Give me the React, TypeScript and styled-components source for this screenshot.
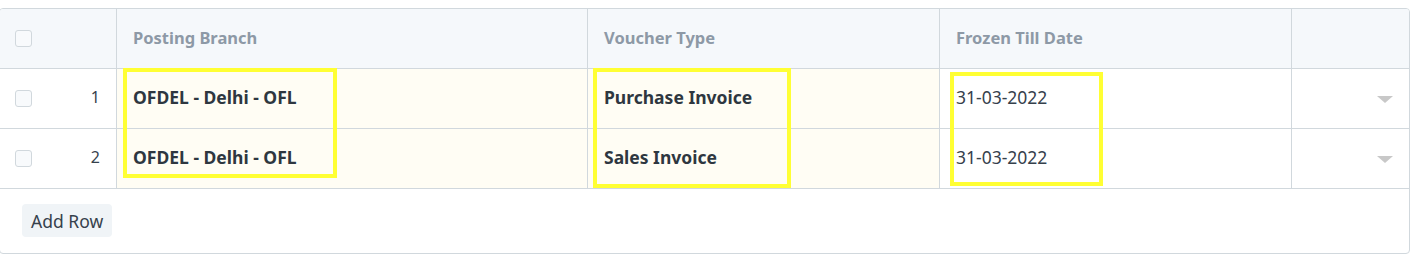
import styled, { createGlobalStyle } from "styled-components";

const Global = createGlobalStyle`
  body {
    margin: 0;
    background: #ffffff;
    font-family: "Noto Sans", "Open Sans", sans-serif;
  }
`;

const COLS = "117px 471px 352px 352px 1fr";

const Page = styled.div`
  position: relative;
  padding-top: 8px;
  height: 262px;
  box-sizing: border-box;
  overflow: hidden;
`;

const Grid = styled.div`
  margin-left: -1px;
  width: 1411px;
  border: 1px solid #d1d8dd;
  border-radius: 4px;
  box-sizing: border-box;
  overflow: hidden;
`;

const Row = styled.div<{ $head?: boolean }>`
  display: grid;
  grid-template-columns: ${COLS};
  height: 60px;
  border-bottom: 1px solid #d1d8dd;
  background: ${(p) => (p.$head ? "#f5f8fb" : "#ffffff")};
  box-sizing: border-box;
`;

const Cell = styled.div<{ $tint?: boolean; $last?: boolean }>`
  display: flex;
  align-items: center;
  padding: 0 16px 3px;
  border-right: ${(p) => (p.$last ? "none" : "1px solid #d1d8dd")};
  background: ${(p) => (p.$tint ? "#fffdf4" : "transparent")};
  font-size: 17.5px;
  color: #36414c;
  white-space: nowrap;
`;

const HeadText = styled.span`
  font-size: 16.5px;
  font-weight: 700;
  color: #8d99a6;
`;

const Strong = styled.span`
  font-weight: 700;
  color: #2e3740;
`;

const IndexCell = styled(Cell)`
  justify-content: space-between;
  padding: 0 16px 0 15px;
`;

const Check = styled.span`
  width: 15px;
  height: 15px;
  border: 1px solid #d1d8dd;
  border-radius: 3px;
  background: #f8fafc;
`;

const Num = styled.span`
  color: #36414c;
  font-size: 16px;
  margin-bottom: 3px;
`;

const Caret = styled.span`
  margin-left: auto;
  margin-top: 4px;
  width: 0;
  height: 0;
  border-left: 8px solid transparent;
  border-right: 8px solid transparent;
  border-top: 7px solid #c8c8c8;
`;

const Footer = styled.div`
  height: 64px;
  padding: 15px 0 0 22px;
  box-sizing: border-box;
`;

const AddButton = styled.button`
  height: 33px;
  padding: 0 9px;
  border: none;
  border-radius: 4px;
  background: #f0f4f7;
  color: #36414c;
  font-family: inherit;
  font-size: 17.5px;
`;

const Mark = styled.div`
  position: absolute;
  border: 4px solid #ffff33;
  box-sizing: border-box;
  pointer-events: none;
`;

const rows = [
  { n: 1, branch: "OFDEL - Delhi - OFL", type: "Purchase Invoice", date: "31-03-2022" },
  { n: 2, branch: "OFDEL - Delhi - OFL", type: "Sales Invoice", date: "31-03-2022" },
];

export default function App() {
  return (
    <Page>
      <Global />
      <Grid>
        <Row $head>
          <IndexCell>
            <Check />
          </IndexCell>
          <Cell>
            <HeadText>Posting Branch</HeadText>
          </Cell>
          <Cell>
            <HeadText>Voucher Type</HeadText>
          </Cell>
          <Cell>
            <HeadText>Frozen Till Date</HeadText>
          </Cell>
          <Cell $last />
        </Row>
        {rows.map((r) => (
          <Row key={r.n}>
            <IndexCell>
              <Check />
              <Num>{r.n}</Num>
            </IndexCell>
            <Cell $tint>
              <Strong>{r.branch}</Strong>
            </Cell>
            <Cell $tint>
              <Strong>{r.type}</Strong>
            </Cell>
            <Cell>{r.date}</Cell>
            <Cell $last>
              <Caret />
            </Cell>
          </Row>
        ))}
        <Footer>
          <AddButton type="button">Add Row</AddButton>
        </Footer>
      </Grid>
      <Mark style={{ left: 123, top: 68, width: 214, height: 110 }} />
      <Mark style={{ left: 593, top: 68, width: 198, height: 120 }} />
      <Mark style={{ left: 950, top: 72, width: 153, height: 114 }} />
    </Page>
  );
}
